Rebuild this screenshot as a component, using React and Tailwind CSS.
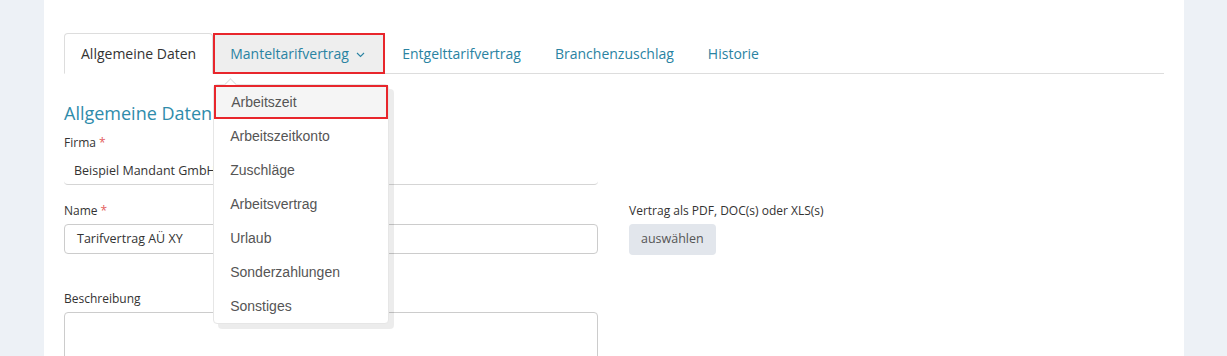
import { useState } from "react";

const tabs = ["Entgelttarifvertrag", "Branchenzuschlag", "Historie"];

const menuItems = [
  "Arbeitszeit",
  "Arbeitszeitkonto",
  "Zuschläge",
  "Arbeitsvertrag",
  "Urlaub",
  "Sonderzahlungen",
  "Sonstiges",
];

function Label({ children, required }) {
  return (
    <div className="text-[12px] leading-[16px] text-[#333]">
      {children}
      {required && <span className="ml-[3px] text-[#e35d5d]">*</span>}
    </div>
  );
}

function Chevron() {
  return (
    <svg width="9" height="6" viewBox="0 0 9 6" className="ml-[7px] mt-[2px]">
      <path d="M1 1l3.5 3.5L8 1" fill="none" stroke="#2a83a2" strokeWidth="1.1" />
    </svg>
  );
}

export default function App() {
  const [active] = useState(0);

  return (
    <div className="h-[356px] overflow-hidden bg-[#edf1f6] font-['Open_Sans',sans-serif]">
      <div className="mx-[44px] h-full w-[1140px] bg-white px-5 pt-[33px]">
        {/* tabs */}
        <ul className="flex border-b border-[#dddddd]">
          <li className="-mb-px flex h-[41px] items-center rounded-t-[4px] border border-b-white border-[#dddddd] bg-white px-4 text-[14px] text-[#333]">
            Allgemeine Daten
          </li>
          <li className="relative -mb-px flex h-[41px] w-[172px] items-center border-2 border-[#e8262c] bg-[#eeeeee] pl-[15px] text-[14px] text-[#2a83a2]">
            Manteltarifvertrag
            <Chevron />
            <div className="absolute left-[-2px] top-[49px] z-10 w-[176px] rounded-[4px] border border-[#e6e6e6] bg-white shadow-[5px_5px_0_0_rgba(0,0,0,0.075)] font-['Liberation_Sans',sans-serif]">
              <div className="absolute left-[12px] top-[-5px] h-[9px] w-[9px] rotate-45 border-l border-t border-[#dedede] bg-white" />
              {menuItems.map((item, i) => (
                <div
                  key={item}
                  className={
                    i === active
                      ? "relative flex h-[34px] items-center border-2 border-[#e8262c] bg-[#f5f5f5] pl-[15px] text-[14px] text-[#555]"
                      : "relative flex h-[34px] items-center pl-[16px] text-[14px] text-[#555]"
                  }
                >
                  {item}
                </div>
              ))}
            </div>
          </li>
          {tabs.map((t) => (
            <li
              key={t}
              className="-mb-px flex h-[41px] items-center px-[17px] text-[14px] text-[#2a83a2] first:pl-[22px]"
            >
              {t}
            </li>
          ))}
        </ul>

        {/* content */}
        <div className="pt-[27px]">
          <h2 className="text-[18px] leading-[24px] text-[#2f8cab]">Allgemeine Daten</h2>

          <div className="mt-[10px] w-[534px]">
            <Label required>Firma</Label>
            <div className="mt-[3px] flex h-[31px] items-center rounded-b-[4px] border-b border-[#d5d5d5] pl-[10px] pt-[4px] text-[12.5px] text-[#333]">
              Beispiel Mandant GmbH
            </div>
          </div>

          <div className="mt-[18px] flex gap-[31px]">
            <div className="w-[534px]">
              <Label required>Name</Label>
              <div className="mt-[5px] flex h-[30px] items-center rounded-[4px] border border-[#cccccc] pl-[12px] text-[12.5px] text-[#333]">
                Tarifvertrag AÜ XY
              </div>
            </div>
            <div>
              <Label>Vertrag als PDF, DOC(s) oder XLS(s)</Label>
              <button className="mt-[5px] h-[31px] rounded-[4px] bg-[#e2e6ec] px-[12px] text-[12.5px] text-[#555]">
                auswählen
              </button>
            </div>
          </div>

          <div className="mt-[36px] w-[534px]">
            <Label>Beschreibung</Label>
            <div className="mt-[5px] h-[80px] rounded-[4px] border border-[#cccccc]" />
          </div>
        </div>
      </div>
    </div>
  );
}
